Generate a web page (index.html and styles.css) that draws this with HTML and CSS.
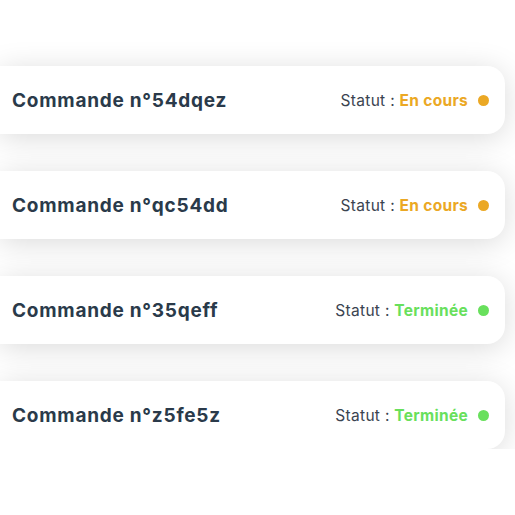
FILE: index.html
```html
<!DOCTYPE html>
<html lang="fr">
<head>
<meta charset="utf-8">
<link rel="stylesheet" href="styles.css">
</head>
<body>
<div class="list">
  <div class="card">
    <span class="title">Commande n°54dqez</span>
    <span class="status">Statut : <b class="pending">En cours</b><i class="dot pending-dot"></i></span>
  </div>
  <div class="card">
    <span class="title">Commande n°qc54dd</span>
    <span class="status">Statut : <b class="pending">En cours</b><i class="dot pending-dot"></i></span>
  </div>
  <div class="card">
    <span class="title">Commande n°35qeff</span>
    <span class="status">Statut : <b class="done">Terminée</b><i class="dot done-dot"></i></span>
  </div>
  <div class="card">
    <span class="title">Commande n°z5fe5z</span>
    <span class="status">Statut : <b class="done">Terminée</b><i class="dot done-dot"></i></span>
  </div>
</div>
</body>
</html>
```
FILE: styles.css
```css
html, body {
  margin: 0;
  padding: 0;
  background: #ffffff;
  font-family: Inter, "Open Sans", sans-serif;
}
.list {
  display: flex;
  flex-direction: column;
  gap: 37px;
  padding: 66px 10px 0 0;
}
.card {
  height: 68px;
  background: #fff;
  border-radius: 0 18px 18px 0;
  box-shadow: 0 4px 30px rgba(0, 0, 0, 0.15);
  display: flex;
  align-items: center;
  justify-content: space-between;
  padding: 0 16px 0 12px;
}
.title {
  font-size: 19px;
  font-weight: 700;
  color: #2a3a4a;
  letter-spacing: 0.75px;
}
.status {
  display: flex;
  align-items: center;
  font-size: 15.5px;
  color: #3a4450;
  letter-spacing: 0.3px;
  white-space: pre;
}
.status b {
  font-weight: 700;
}
.pending { color: #eba824; }
.done { color: #68e05c; }
.dot {
  width: 11px;
  height: 11px;
  border-radius: 50%;
  margin-left: 10px;
}
.pending-dot { background: #eba824; }
.done-dot { background: #68e05c; }
```
